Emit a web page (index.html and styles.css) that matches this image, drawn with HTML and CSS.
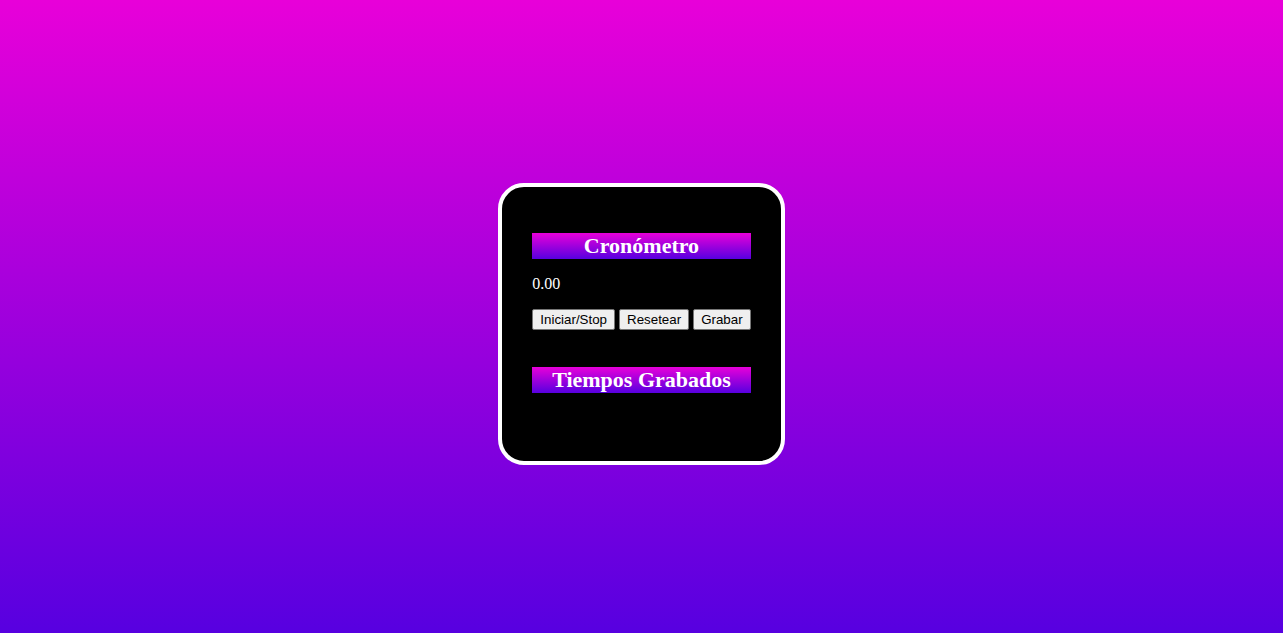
FILE: index.html
```html
<!DOCTYPE html>
<html lang="es">
<head>
    <meta charset="UTF-8">
    <meta name="viewport" content="width=device-width, initial-scale=1.0">
    <title>Cronómetro</title>
    <link rel="stylesheet" href="styles.css">
</head>
<body>

    <div class="reloj">
        <h2>Cronómetro</h2>
        <p id="tiempo">0.00</p>
        <div class="botones">
            <button id="iniciar">Iniciar/Stop</button>
            <button id="resetear">Resetear</button>
            <button id="grabar">Grabar</button>
        </div>
        <h2 class="grabados">Tiempos Grabados</h2>
        <ul id="lista"></ul>
    </div>

</body>
</html>
```

FILE: styles.css
```css
* {
  margin: 0;
  padding: 0;
}
body {
    font-family: "Liberation Serif", "Times New Roman", serif;
    background: linear-gradient(#e800d9, #5700e0);
    display: flex;
    align-items: center;
    justify-content: center;
    height: 100vh;
    padding-top: 15px;
    box-sizing: border-box;
}
.reloj {
    background: black;
    border: 4px solid white;
    border-radius: 26px;
    padding: 46px 30px 30px 30px;
    color: white;
}
h2 {
    font-size: 22px;
    line-height: 26px;
    text-align: center;
    background: linear-gradient(#e800d9, #5700e0);
}
#tiempo {
    font-size: 16px;
    line-height: 18px;
    margin: 16px 0 16px 0;
}
.botones {
    height: 21px;
}
button {
    font-family: "Liberation Sans", Arial, sans-serif;
    font-size: 13.33px;
    padding: 1px 7px;
    color: black;
    background: #efefef;
    border: 1px solid #767676;
    border-radius: 2px;
    height: 21px;
}
.grabados {
    margin-top: 37px;
}
#lista {
    list-style: none;
    height: 38px;
}
```
